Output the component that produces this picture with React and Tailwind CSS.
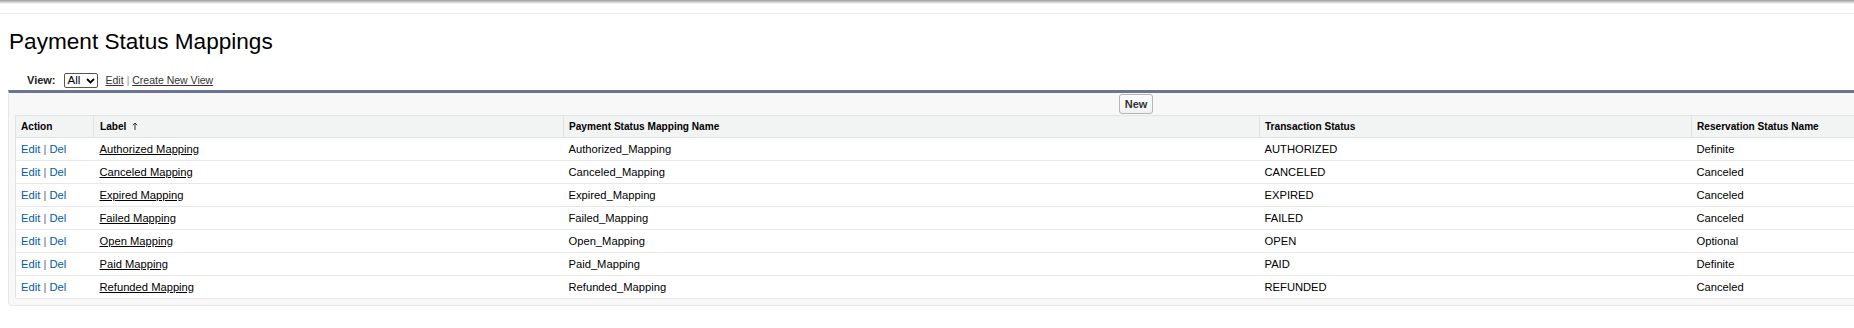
import React from "react";

const rows = [
  { label: "Authorized Mapping", name: "Authorized_Mapping", tx: "AUTHORIZED", res: "Definite" },
  { label: "Canceled Mapping", name: "Canceled_Mapping", tx: "CANCELED", res: "Canceled" },
  { label: "Expired Mapping", name: "Expired_Mapping", tx: "EXPIRED", res: "Canceled" },
  { label: "Failed Mapping", name: "Failed_Mapping", tx: "FAILED", res: "Canceled" },
  { label: "Open Mapping", name: "Open_Mapping", tx: "OPEN", res: "Optional" },
  { label: "Paid Mapping", name: "Paid_Mapping", tx: "PAID", res: "Definite" },
  { label: "Refunded Mapping", name: "Refunded_Mapping", tx: "REFUNDED", res: "Canceled" },
];

export default function App() {
  return (
    <div className="w-full h-[328px] overflow-hidden bg-white font-['Liberation_Sans',Arial,sans-serif] text-black">
      {/* top shadow + divider */}
      <div className="h-[4px] bg-gradient-to-b from-[#9c9c9c] to-white" />
      <div className="h-[9px]" />
      <div className="border-t border-[#ececec]" />

      {/* title */}
      <h1 className="ml-[9px] mt-[15px] text-[22.6px] leading-[26px] font-normal">
        Payment Status Mappings
      </h1>

      {/* view selector */}
      <div className="mt-[18px] ml-[27px] flex items-center h-[15px] text-[11px]">
        <span className="font-bold text-[#222]">View:</span>
        <span className="ml-[8px] flex items-center h-[15px] w-[34px] border border-[#555] rounded-[2px] pl-[3px] pr-[2px] text-[11.5px] leading-none">
          All
          <svg className="ml-auto" width="9" height="6" viewBox="0 0 9 6">
            <path d="M1 1l3.5 3.5L8 1" fill="none" stroke="#000" strokeWidth="1.8" />
          </svg>
        </span>
        <a href="#" className="ml-[8px] text-[10.5px] text-[#333] underline">Edit</a>
        <span className="mx-[3px] text-[10px] text-[#888]">|</span>
        <a href="#" className="text-[10.5px] text-[#333] underline">Create New View</a>
      </div>

      {/* list panel */}
      <div className="mt-[2px] ml-[8px] w-[2256px] bg-[#f8f8f8] border-t-[3px] border-t-[#6c7693] border-x border-b border-[#e6e6e6] rounded-b-[4px] pb-[6px]">
        <div className="h-[22px] flex justify-center pt-[1px]">
          <button className="h-[20px] w-[34px] border border-[#b5b5b5] rounded-[3px] bg-gradient-to-b from-white to-[#f1f1f1] text-[11px] font-bold text-[#333]">
            New
          </button>
        </div>
        <table className="ml-[6px] w-[2242px] table-fixed border-collapse border border-[#e0e3e5] bg-white text-[11.2px]">
          <colgroup>
            <col className="w-[78px]" />
            <col className="w-[470px]" />
            <col className="w-[696px]" />
            <col className="w-[432px]" />
            <col />
          </colgroup>
          <thead>
            <tr className="h-[22px] bg-[#f2f3f3] text-left text-[10.1px] font-bold">
              <th className="pl-[5px] border-b border-[#e0e3e5]">Action</th>
              <th className="pl-[6px] border-b border-l border-[#e0e3e5]">
                <span className="inline-flex items-center">
                  Label
                  <svg className="ml-[6px]" width="6" height="8" viewBox="0 0 6 8">
                    <path d="M3 8V1M0.8 3.2L3 1l2.2 2.2" fill="none" stroke="#333" strokeWidth="1" />
                  </svg>
                </span>
              </th>
              <th className="pl-[5px] border-b border-l border-[#e0e3e5]">Payment Status Mapping Name</th>
              <th className="pl-[5px] border-b border-l border-[#e0e3e5]">Transaction Status</th>
              <th className="pl-[5px] border-b border-l border-[#e0e3e5]">Reservation Status Name</th>
            </tr>
          </thead>
          <tbody>
            {rows.map((r) => (
              <tr key={r.name} className="h-[23px] border-b border-[#e8e8e8]">
                <td className="pl-[5px] whitespace-nowrap">
                  <a href="#" className="text-[#015ba7]">Edit</a>
                  <span className="text-[#666]"> | </span>
                  <a href="#" className="text-[#015ba7]">Del</a>
                </td>
                <td className="pl-[6px]">
                  <a href="#" className="underline text-black">{r.label}</a>
                </td>
                <td className="pl-[5px]">{r.name}</td>
                <td className="pl-[5px]">{r.tx}</td>
                <td className="pl-[5px]">{r.res}</td>
              </tr>
            ))}
          </tbody>
        </table>
      </div>
    </div>
  );
}
